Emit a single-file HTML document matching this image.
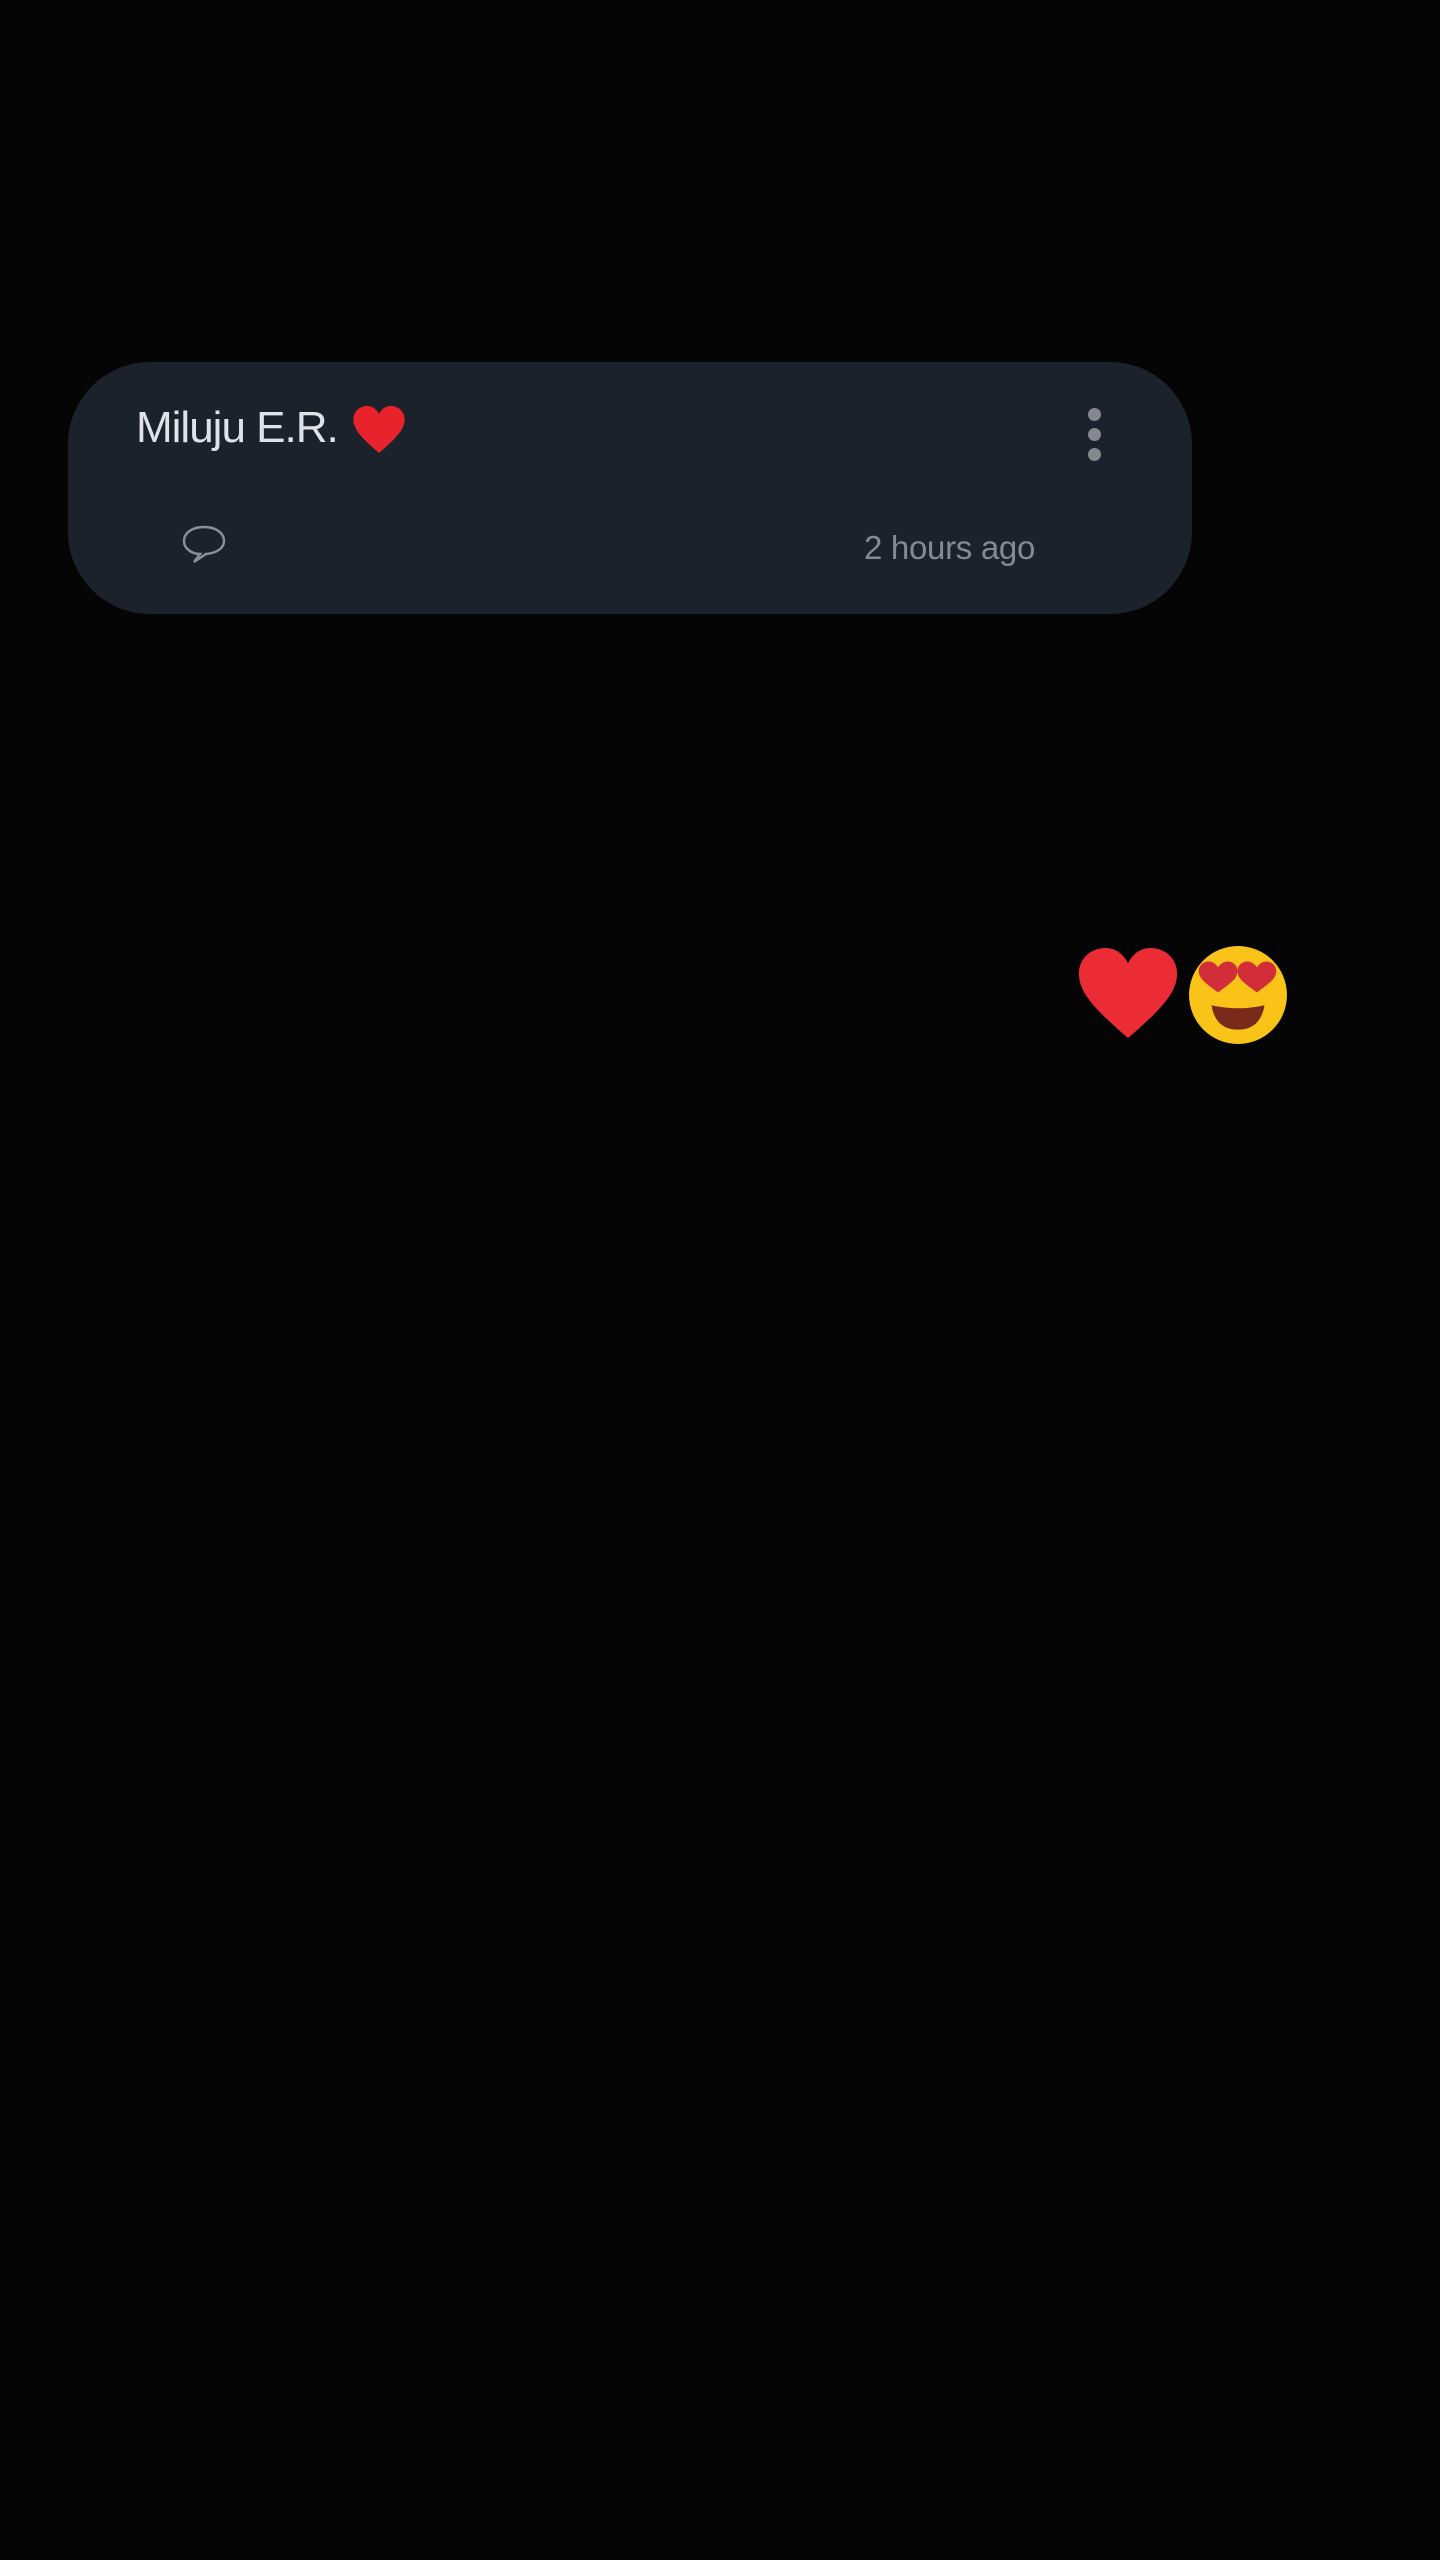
<!DOCTYPE html>
<html><head><meta charset="utf-8"><style>
html,body{margin:0;padding:0;background:#050505;width:1440px;height:2560px;overflow:hidden;font-family:"Liberation Sans",sans-serif}
.card{position:absolute;left:68px;top:362px;width:1124px;height:252px;background:#1c222b;border-radius:82px}
.title{position:absolute;left:136px;top:403px;font-size:44px;color:#dfe2e6;letter-spacing:-1px}
.time{position:absolute;left:864px;top:529px;font-size:33px;color:#868a90;letter-spacing:-0.3px}
.dot{position:absolute;left:1088px;width:13px;height:13px;border-radius:50%;background:#85888d}
</style></head><body>
<div class="card"></div>
<div class="title">Miluju E.R.</div>
<svg style="position:absolute;left:352px;top:406px" width="54" height="48" viewBox="0 0 100 90"><path d="M50 88 C20 62 2 45 2 25 C2 10 14 0 28 0 C39 0 46 7 50 15 C54 7 61 0 72 0 C86 0 98 10 98 25 C98 45 80 62 50 88Z" fill="#e8232c"/></svg>
<div class="dot" style="top:408px"></div><div class="dot" style="top:428px"></div><div class="dot" style="top:448px"></div>
<svg style="position:absolute;left:180px;top:524px" width="48" height="42" viewBox="0 0 48 42"><path d="M24 3 C12 3 4 9 4 17 C4 24 11 30 20 30 L14 38 L26 30 C37 29 44 24 44 17 C44 9 36 3 24 3Z" fill="none" stroke="#8a8e94" stroke-width="2.5"/></svg>
<div class="time">2 hours ago</div>
<svg style="position:absolute;left:1074px;top:948px" width="108" height="92" viewBox="0 0 100 90"><path d="M50 88 C20 62 2 45 2 25 C2 10 14 0 28 0 C39 0 46 7 50 15 C54 7 61 0 72 0 C86 0 98 10 98 25 C98 45 80 62 50 88Z" fill="#ec2c34"/></svg>
<svg style="position:absolute;left:1187px;top:944px" width="102" height="102" viewBox="0 0 100 100">
<circle cx="50" cy="50" r="48" fill="#f9c318"/>
<path d="M30 50 C18 41 10 36 10 28 C10 22 15 18 20 18 C25 18 28 21 30 24 C32 21 35 18 40 18 C45 18 50 22 50 28 C50 36 42 41 30 50Z" transform="translate(2 0) scale(0.95)" fill="#d22e3a"/>
<path d="M70 50 C58 41 50 36 50 28 C50 22 55 18 60 18 C65 18 68 21 70 24 C72 21 75 18 80 18 C85 18 90 22 90 28 C90 36 82 41 70 50Z" transform="translate(2 0) scale(0.95)" fill="#d22e3a"/>
<path d="M24 60 Q50 66 76 60 Q72 84 50 84 Q28 84 24 60Z" fill="#7a2a1a"/>
</svg>
</body></html>
